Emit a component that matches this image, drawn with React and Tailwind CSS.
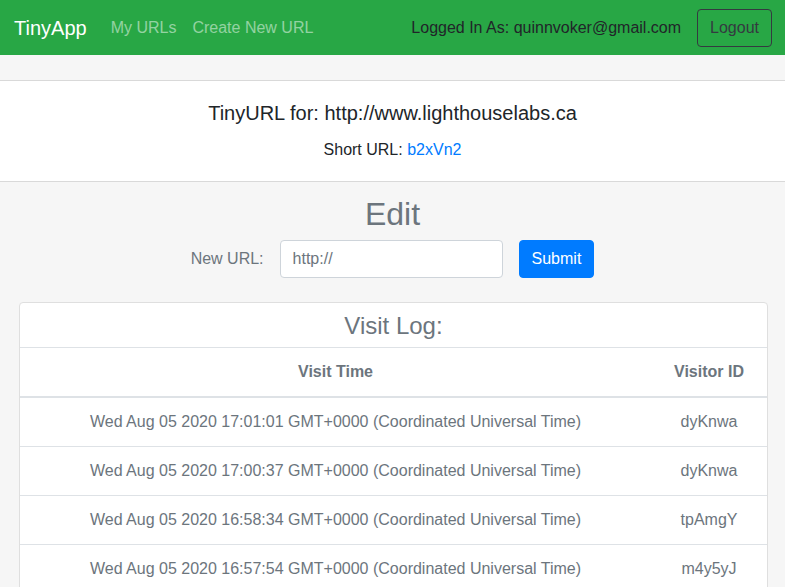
const visits = [
  { time: "Wed Aug 05 2020 17:01:01 GMT+0000 (Coordinated Universal Time)", id: "dyKnwa" },
  { time: "Wed Aug 05 2020 17:00:37 GMT+0000 (Coordinated Universal Time)", id: "dyKnwa" },
  { time: "Wed Aug 05 2020 16:58:34 GMT+0000 (Coordinated Universal Time)", id: "tpAmgY" },
  { time: "Wed Aug 05 2020 16:57:54 GMT+0000 (Coordinated Universal Time)", id: "m4y5yJ" },
  { time: "Wed Aug 05 2020 16:55:12 GMT+0000 (Coordinated Universal Time)", id: "m4y5yJ" },
];

function Navbar() {
  return (
    <nav className="flex h-[55px] items-center justify-between bg-[#28a745] pl-[14px] pr-[13px]">
      <div className="flex items-center">
        <span className="mr-4 text-[20px] leading-[30px] text-white">TinyApp</span>
        <a className="px-2 text-white/50">My URLs</a>
        <a className="px-2 text-white/50">Create New URL</a>
      </div>
      <div className="flex items-center">
        <span className="mr-4 text-[#212529]">Logged In As: quinnvoker@gmail.com</span>
        <button className="h-[38px] rounded border border-[#343a40] px-3 text-[#343a40]">
          Logout
        </button>
      </div>
    </nav>
  );
}

function VisitLog() {
  return (
    <div className="ml-[19px] mr-[17px] overflow-hidden rounded border border-[#dfdfdf] bg-white">
      <h4 className="pt-2 pb-[7px] text-center text-[24px] leading-[29px] text-[#6c757d]">Visit Log:</h4>
      <table className="w-full text-[#6c757d]">
        <thead>
          <tr className="border-t border-b-2 border-t-[#dee2e6] border-b-[#dee2e6]">
            <th className="p-3 text-center font-bold">Visit Time</th>
            <th className="w-[116px] p-3 text-center font-bold">Visitor ID</th>
          </tr>
        </thead>
        <tbody>
          {visits.map((v, i) => (
            <tr key={i} className="border-t border-[#dee2e6] first:border-t-0">
              <td className="p-3 text-center">{v.time}</td>
              <td className="p-3 text-center">{v.id}</td>
            </tr>
          ))}
        </tbody>
      </table>
    </div>
  );
}

export default function App() {
  return (
    <div className="min-h-screen bg-[#f6f6f6] font-['Liberation_Sans',Arial,sans-serif] text-[16px] leading-6 text-[#212529]">
      <Navbar />
      <div className="mt-[25px] flex flex-col items-center gap-[13px] border-y border-[#d9d9d9] bg-white pt-[20px] pb-[19px]">
        <h5 className="text-[20px] leading-6">TinyURL for: http://www.lighthouselabs.ca</h5>
        <p>
          Short URL: <a className="text-[#007bff]">b2xVn2</a>
        </p>
      </div>
      <div className="flex flex-col items-center pt-[13px]">
        <h2 className="text-[32px] leading-[38px] text-[#6c757d]">Edit</h2>
        <form className="mt-[7px] flex items-center" onSubmit={(e) => e.preventDefault()}>
          <label className="mr-4 text-[#6c757d]">New URL:</label>
          <input
            className="h-[38px] w-[223px] rounded border border-[#ced4da] bg-white px-3 text-[#6c757d] outline-none"
            defaultValue="http://"
          />
          <button className="ml-4 h-[38px] rounded border border-[#007bff] bg-[#007bff] px-3 text-white">
            Submit
          </button>
        </form>
      </div>
      <div className="mt-[24px]">
        <VisitLog />
      </div>
    </div>
  );
}
